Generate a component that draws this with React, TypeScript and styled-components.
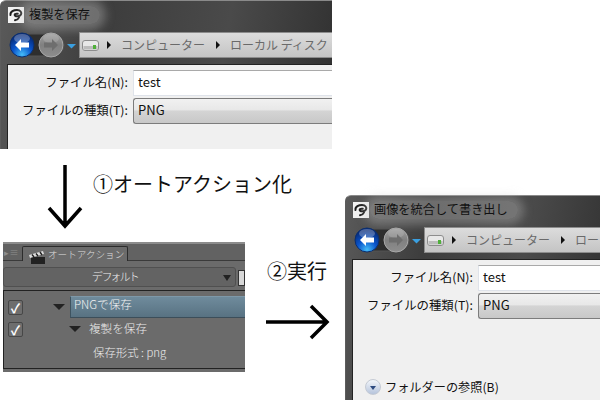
import styled, { createGlobalStyle } from "styled-components";

const jp = `"Noto Sans CJK JP", "Noto Sans", sans-serif`;

const GlobalStyle = createGlobalStyle`
    html, body {
        margin: 0;
        padding: 0;
        background: #fff;
    }
    body {
        font-family: ${jp};
    }
`;

function AppIcon() {
    return (
        <IconBox>
            <svg width="16" height="16" viewBox="0 0 16 16">
                <path
                    d="M2.5 8 C2 4.5 6 3 9 3 C12.5 3 14 5.5 13 7.5 C12 9.5 8.5 9.8 7 8.6 C6 7.6 7.5 6.3 9.8 6.8"
                    fill="none"
                    stroke="#1c1c1c"
                    strokeWidth="2"
                    strokeLinecap="round"
                />
                <path d="M11 10.5 C10.4 12 8.8 13 7 13.2" fill="none" stroke="#1c1c1c" strokeWidth="2" strokeLinecap="round" />
            </svg>
        </IconBox>
    );
}

function NavButtons({ id }: { id: string }) {
    return (
        <svg width="68" height="28" viewBox="0 0 68 28">
            <defs>
                <radialGradient id={`${id}-blue`} cx="50%" cy="90%" r="80%">
                    <stop offset="0" stopColor="#45bdf8" />
                    <stop offset="0.5" stopColor="#0a55cc" />
                    <stop offset="1" stopColor="#062a78" />
                </radialGradient>
                <linearGradient id={`${id}-grey`} x1="0" y1="0" x2="0" y2="1">
                    <stop offset="0" stopColor="#a2a2a2" />
                    <stop offset="0.5" stopColor="#808080" />
                    <stop offset="1" stopColor="#8e8e8e" />
                </linearGradient>
            </defs>
            <rect x="2" y="3" width="54" height="22" rx="11" fill="#2e2e2e" stroke="#555" />
            <circle cx="14" cy="14" r="12" fill={`url(#${id}-blue)`} stroke="#0c2f6e" />
            <ellipse cx="14" cy="7.5" rx="8" ry="4.5" fill="#fff" opacity="0.28" />
            <path d="M7 14 L13 8 V11.5 H21 V16.5 H13 V20 Z" fill="#fff" />
            <circle cx="43" cy="14" r="12" fill={`url(#${id}-grey)`} stroke="#a8a8a8" />
            <ellipse cx="43" cy="7.5" rx="8" ry="4.5" fill="#fff" opacity="0.14" />
            <path d="M50 14 L44 8 V11.5 H36 V16.5 H44 V20 Z" fill="#6e6e6e" />
            <path d="M59 13 H68 L63.5 17.5 Z" fill="#3a9fe0" />
        </svg>
    );
}

function DriveIcon() {
    return (
        <svg width="17" height="11" viewBox="0 0 17 11">
            <rect x="0.5" y="0.5" width="16" height="10" rx="2.5" fill="#e8e8e8" stroke="#8d8d8d" />
            <rect x="1.5" y="6" width="14" height="3.5" fill="#bcbcbc" />
            <rect x="11" y="5" width="3" height="4" fill="#4fb03a" />
        </svg>
    );
}

function SaveDialog({
    id,
    title,
    crumb,
    children,
}: {
    id: string;
    title: string;
    crumb: string;
    children?: React.ReactNode;
}) {
    return (
        <>
            <TitleBar>
                <AppIcon />
                <TitleText>{title}</TitleText>
            </TitleBar>
            <NavBar>
                <NavButtons id={id} />
                <AddressBar>
                    <DriveIcon />
                    <Crumb>コンピューター</Crumb>
                    <Crumb>{crumb}</Crumb>
                </AddressBar>
            </NavBar>
            <Content>
                <FormRow>
                    <FieldLabel>ファイル名(N):</FieldLabel>
                    <NameInput>test</NameInput>
                </FormRow>
                <FormRow>
                    <FieldLabel>ファイルの種類(T):</FieldLabel>
                    <TypeSelect>PNG</TypeSelect>
                </FormRow>
                {children}
            </Content>
        </>
    );
}

function ActionPanel() {
    return (
        <Panel>
            <TabRow>
                <PanelMenu>▸≡</PanelMenu>
                <Tab>
                    <ClapperIcon width="17" height="13" viewBox="0 0 17 13">
                        <rect x="2" y="6" width="14" height="7" fill="#222" />
                        <path d="M0 4 L14 0 L15 3 L1 7 Z" fill="#ddd" />
                        <path d="M3 3.5 L5 6 M7 2.5 L9 5 M11 1 L13 4" stroke="#222" strokeWidth="1.4" />
                    </ClapperIcon>
                    <TabText>オートアクション</TabText>
                </Tab>
            </TabRow>
            <SetRow>
                <SetSelect>
                    デフォルト
                    <SelectArrow />
                </SetSelect>
                <SmallBox />
            </SetRow>
            <ActionList>
                <ActionRow>
                    <CheckBox>✓</CheckBox>
                    <Triangle $left={30} />
                    <ActionSelected>PNGで保存</ActionSelected>
                </ActionRow>
                <ActionRow>
                    <CheckBox>✓</CheckBox>
                    <Triangle $left={46} />
                    <ActionName>複製を保存</ActionName>
                </ActionRow>
                <DetailRow>
                    <DetailText>保存形式 : png</DetailText>
                </DetailRow>
            </ActionList>
        </Panel>
    );
}

export default function App() {
    return (
        <>
            <GlobalStyle />
            <Canvas>
                <Window $x={0} $y={0} $w={332} $h={149}>
                    <SaveDialog id="first" title="複製を保存" crumb="ローカル ディスク" />
                </Window>

                <BigArrow $x={46} $y={164} width="38" height="66" viewBox="0 0 38 66">
                    <path d="M19 1 V63 M3 44 L19 62 L35 44" fill="none" stroke="#000" strokeWidth="3.5" />
                </BigArrow>
                <Caption $x={93} $y={169}>①オートアクション化</Caption>

                <PanelSlot>
                    <ActionPanel />
                </PanelSlot>

                <Caption $x={267} $y={256}>②実行</Caption>
                <BigArrow $x={266} $y={303} width="64" height="38" viewBox="0 0 64 38">
                    <path d="M0 19 H60 M45 3 L61 19 L45 35" fill="none" stroke="#000" strokeWidth="3.5" />
                </BigArrow>

                <Window $x={345} $y={195} $w={255} $h={205}>
                    <SaveDialog id="second" title="画像を統合して書き出し" crumb="ロー">
                        <BrowseRow>
                            <BrowseButton />
                            フォルダーの参照(B)
                        </BrowseRow>
                    </SaveDialog>
                </Window>
            </Canvas>
        </>
    );
}

const Canvas = styled.div`
    position: relative;
    width: 600px;
    height: 400px;
    overflow: hidden;
    background: #fff;
`;

const Window = styled.div<{ $x: number; $y: number; $w: number; $h: number }>`
    position: absolute;
    left: ${(p) => p.$x}px;
    top: ${(p) => p.$y}px;
    width: ${(p) => p.$w}px;
    height: ${(p) => p.$h}px;
    box-sizing: border-box;
    display: flex;
    flex-direction: column;
    padding: 1px 0 0 6px;
    border-radius: 6px 0 0 0;
    border-top: 1px solid #8a8a8a;
    border-left: 1px solid #5c5c5c;
    background: linear-gradient(100deg, #5a5a5a 0%, #3d3d3d 30%, #4a4a4a 65%, #2f2f2f 100%);
`;

const TitleBar = styled.div`
    height: 26px;
    display: flex;
    align-items: center;
    gap: 5px;
    margin-left: 1px;
`;

const IconBox = styled.div`
    width: 16px;
    height: 16px;
    background: #f2f2f2;
    display: flex;
`;

const TitleText = styled.div`
    font-size: 12.2px;
    line-height: 16px;
    color: #111;
    padding: 0 10px 2px 4px;
    margin-left: -4px;
    border-radius: 10px;
    background: rgba(200, 200, 200, 0.35);
    box-shadow: 0 0 10px 6px rgba(200, 200, 200, 0.35);
`;

const NavBar = styled.div`
    height: 28px;
    display: flex;
    align-items: center;
    margin-left: 1px;
    margin-top: 3px;
`;

const AddressBar = styled.div`
    flex: 1;
    height: 26px;
    margin-left: 3px;
    box-sizing: border-box;
    display: flex;
    align-items: center;
    padding-left: 2px;
    background: linear-gradient(#dcdcdc, #c4c4c4);
    border: 1px solid #8c8c8c;
    border-right: 0;
    overflow: hidden;
    white-space: nowrap;
`;

const Crumb = styled.span`
    font-size: 12px;
    color: #6a6a6a;
    margin-left: 8px;
    padding-bottom: 2px;
    &::before {
        content: "";
        display: inline-block;
        width: 0;
        height: 0;
        margin: 0 10px 1px 0;
        border-left: 4px solid #111;
        border-top: 4px solid transparent;
        border-bottom: 4px solid transparent;
    }
    & + & {
        margin-left: 11px;
    }
`;

const Content = styled.div`
    flex: 1;
    position: relative;
    margin-top: 5px;
    box-sizing: border-box;
    padding: 5px 0 0;
    display: flex;
    flex-direction: column;
    gap: 2px;
    background: #f0f0f0;
    border-top: 1px solid #222;
    border-left: 1px solid #222;
`;

const FormRow = styled.div`
    display: flex;
    align-items: center;
    height: 26px;
`;

const FieldLabel = styled.div`
    width: 120px;
    margin-right: 5px;
    padding-bottom: 2px;
    flex: none;
    text-align: right;
    font-size: 12.4px;
    color: #111;
    white-space: nowrap;
`;

const NameInput = styled.div`
    flex: 1;
    height: 26px;
    box-sizing: border-box;
    padding-left: 4px;
    font-size: 13px;
    line-height: 21px;
    color: #111;
    background: #fff;
    border: 1px solid #dfe3ea;
    border-top-color: #a9a9a9;
    border-right: 0;
`;

const TypeSelect = styled.div`
    flex: 1;
    height: 26px;
    box-sizing: border-box;
    padding-left: 4px;
    font-size: 13px;
    line-height: 21px;
    color: #111;
    background: linear-gradient(#f1f1f1 0%, #e8e8e8 45%, #d4d4d4 50%, #c8c8c8 100%);
    border: 1px solid #7c7c7c;
    border-right: 0;
    border-radius: 3px 0 0 3px;
`;

const BrowseRow = styled.div`
    position: absolute;
    left: 12px;
    bottom: 4px;
    display: flex;
    align-items: center;
    gap: 4px;
    font-size: 12.2px;
    color: #111;
`;

const BrowseButton = styled.span`
    position: relative;
    width: 14px;
    height: 14px;
    border-radius: 50%;
    background: linear-gradient(#f2f5fa, #b6c4dc);
    border: 1px solid #c4cad4;
    &::after {
        content: "";
        position: absolute;
        left: 3.5px;
        top: 5.5px;
        border-top: 4px solid #2d4a80;
        border-left: 3.5px solid transparent;
        border-right: 3.5px solid transparent;
    }
`;

const BigArrow = styled.svg<{ $x: number; $y: number }>`
    position: absolute;
    left: ${(p) => p.$x}px;
    top: ${(p) => p.$y}px;
`;

const Caption = styled.div<{ $x: number; $y: number }>`
    position: absolute;
    left: ${(p) => p.$x}px;
    top: ${(p) => p.$y}px;
    font-size: 20px;
    line-height: 30px;
    color: #111;
    white-space: nowrap;
`;

const PanelSlot = styled.div`
    position: absolute;
    left: 3px;
    top: 242px;
    width: 242px;
    height: 130px;
`;

const Panel = styled.div`
    height: 100%;
    box-sizing: border-box;
    display: flex;
    flex-direction: column;
    padding-bottom: 3px;
    background: #6b6b6b;
    border-top: 2px solid #8c8c8c;
    overflow: hidden;
    color: #e8e8e8;
    font-weight: 300;
`;

const TabRow = styled.div`
    height: 17px;
    flex: none;
    display: flex;
    align-items: flex-end;
    box-sizing: border-box;
    background: #626262;
    border-bottom: 1px solid #3a3a3a;
`;

const PanelMenu = styled.div`
    width: 17px;
    font-size: 9px;
    line-height: 14px;
    color: #8f8f8f;
    text-align: center;
`;

const Tab = styled.div`
    position: relative;
    width: 106px;
    height: 15px;
    margin-left: 2px;
    margin-bottom: -1px;
    box-sizing: border-box;
    display: flex;
    align-items: center;
    padding-left: 25px;
    background: #6b6b6b;
    border: 1px solid #2c2c2c;
    border-bottom: 0;
    border-radius: 2px 2px 0 0;
`;

const ClapperIcon = styled.svg`
    position: absolute;
    left: 6px;
    top: 4px;
`;

const TabText = styled.span`
    font-size: 9.6px;
    color: #dedede;
    white-space: nowrap;
`;

const SetRow = styled.div`
    height: 29px;
    flex: none;
    box-sizing: border-box;
    padding-top: 6px;
    display: flex;
    align-items: flex-start;
    gap: 2px;
`;

const SetSelect = styled.div`
    position: relative;
    width: 235px;
    height: 20px;
    box-sizing: border-box;
    text-align: center;
    font-size: 11px;
    font-feature-settings: "palt";
    line-height: 17px;
    padding-right: 8px;
    color: #f0f0f0;
    background: #636363;
    border: 1px solid #505050;
    border-radius: 3px;
`;

const SelectArrow = styled.span`
    position: absolute;
    right: 4px;
    top: 7px;
    border-top: 6px solid #222;
    border-left: 4px solid transparent;
    border-right: 4px solid transparent;
`;

const SmallBox = styled.div`
    width: 5px;
    height: 14px;
    margin-top: 3px;
    flex: none;
    background: #d8d8d8;
    border: 1px solid #333;
`;

const ActionList = styled.div`
    flex: 1;
    display: flex;
    flex-direction: column;
    box-sizing: border-box;
    padding-top: 5px;
    border-top: 1px solid #222;
    border-left: 1px solid #222;
    border-bottom: 1px solid #222;
    background: #6b6b6b;
`;

const ActionRow = styled.div`
    flex: none;
    height: 22px;
    display: flex;
    align-items: center;
`;

const DetailRow = styled(ActionRow)`
    margin-top: 2px;
`;

const CheckBox = styled.div`
    width: 13px;
    height: 13px;
    margin-left: 4px;
    flex: none;
    border: 1px solid #474747;
    border-radius: 2px;
    background: #6e6e6e;
    color: #fff;
    font-size: 13px;
    line-height: 13px;
    text-align: center;
    font-weight: 700;
`;

const Triangle = styled.span<{ $left: number }>`
    margin-left: ${(p) => p.$left}px;
    flex: none;
    border-top: 6px solid #222;
    border-left: 6.5px solid transparent;
    border-right: 6.5px solid transparent;
`;

const ActionSelected = styled.div`
    flex: 1;
    height: 22px;
    margin-left: 5px;
    padding-left: 3px;
    box-sizing: border-box;
    font-size: 11.6px;
    line-height: 15px;
    color: #f2f2f2;
    background: linear-gradient(#6f8b9c, #587282);
    border-top: 1px solid #7e98a8;
    border-left: 1px solid #3e5360;
    border-bottom: 1px solid #3c4e5a;
`;

const ActionName = styled.div`
    margin-left: 8px;
    padding-bottom: 2px;
    font-size: 11.6px;
    color: #ececec;
`;

const DetailText = styled.div`
    margin-left: 89px;
    padding-bottom: 3px;
    font-size: 11.4px;
    color: #ececec;
    white-space: nowrap;
`;
